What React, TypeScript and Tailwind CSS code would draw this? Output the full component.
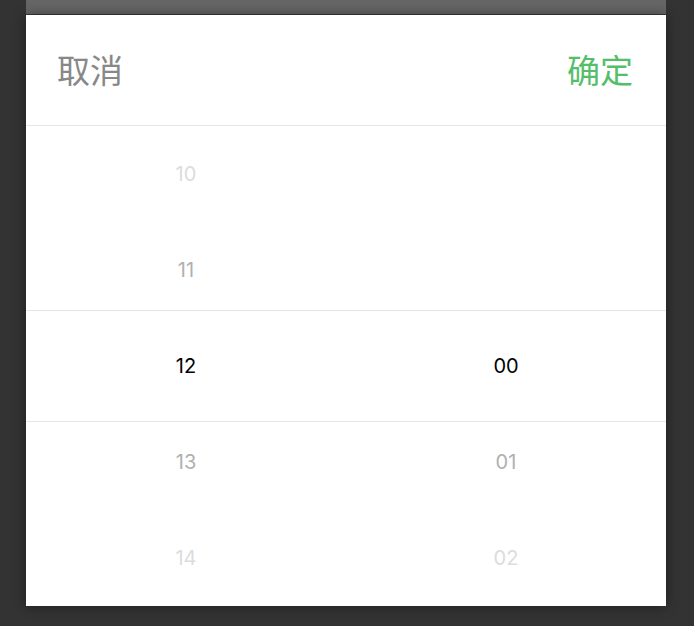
const hours = ["10", "11", "12", "13", "14"];
const minutes = ["", "", "00", "01", "02"];

const tone = ["text-[#dcdcdc]", "text-[#b0b0b0]", "text-black", "text-[#b0b0b0]", "text-[#dcdcdc]"];

function Column({ items }: { items: string[] }) {
  return (
    <div className="flex-1 flex flex-col">
      {items.map((v, i) => (
        <div
          key={i}
          className={`h-[96px] flex items-center justify-center text-[20px] ${tone[i]}`}
        >
          {v}
        </div>
      ))}
    </div>
  );
}

export default function App() {
  return (
    <div
      className="w-[694px] h-[626px] bg-[#333333] flex flex-col pl-[26px] overflow-hidden"
      style={{ fontFamily: 'Inter, "Noto Sans CJK SC", sans-serif' }}
    >
      <div className="w-[640px] h-[15px] bg-[#666666] border-b border-[#3a3a3a]" />
      <div className="w-[640px] bg-white shadow-[0_0_12px_rgba(0,0,0,0.45)]">
        <div className="h-[111px] flex items-center justify-between pl-[31px] pr-[33px] border-b border-[#e5e5e5]">
          <span className="text-[33px] text-[#888888]" style={{ fontFamily: '"Noto Sans CJK SC", sans-serif' }}>
            取消
          </span>
          <span className="text-[33px] text-[#55be6b]" style={{ fontFamily: '"Noto Sans CJK SC", sans-serif' }}>
            确定
          </span>
        </div>
        <div className="relative flex h-[480px]">
          <Column items={hours} />
          <Column items={minutes} />
          <div className="absolute left-0 right-0 top-[184px] h-[112px] border-y border-[#e5e5e5] pointer-events-none" />
        </div>
      </div>
    </div>
  );
}
